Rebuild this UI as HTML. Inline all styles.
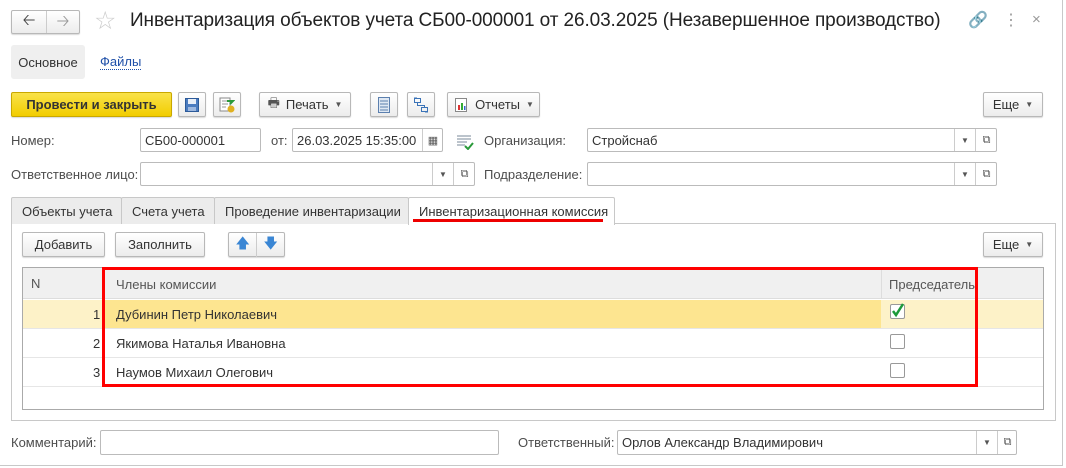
<!DOCTYPE html>
<html><head><meta charset="utf-8"><style>
*{box-sizing:border-box;margin:0;padding:0}
body{width:1066px;height:468px;background:#fff;font-family:"Liberation Sans",Arial,sans-serif;font-size:13px;color:#333;position:relative;overflow:hidden}
.a{position:absolute}
.btn{position:absolute;border:1px solid #b8b8b8;border-radius:2px;background:linear-gradient(#fff,#ececec);box-shadow:0 1px 1px rgba(0,0,0,.15);display:flex;align-items:center;justify-content:center;color:#333}
.inp{position:absolute;border:1px solid #bbb;border-radius:2px;background:#fff;display:flex;align-items:center;padding-left:4px;color:#333}
.lbl{position:absolute;color:#4d4d4d}
.dd{position:absolute;top:0;bottom:0;border-left:1px solid #ccc;display:flex;align-items:center;justify-content:center;font-size:8px;color:#555}
.tab{position:absolute;top:197px;height:27px;border:1px solid #c8c8c8;background:#ececec;border-bottom:none;display:flex;align-items:center;padding-left:10px;border-radius:2px 2px 0 0}
.cb{position:absolute;width:15px;height:15px;border:1px solid #999;border-radius:2px;background:#fff}
.tri{font-size:8px;margin-left:6px;color:#555}
</style></head><body>
<div class="a" style="left:0;top:0;width:1063px;height:466px;border:1px solid #c8c8c8;border-left:none;border-top:none"></div>
<div class="btn" style="left:11px;top:10px;width:69px;height:24px;justify-content:flex-start"><span style="width:35px;text-align:center;font-size:16px;color:#444">&#129120;</span><span style="border-left:1px solid #ccc;height:22px;width:34px;text-align:center;font-size:16px;color:#999;line-height:22px">&#129122;</span></div>
<div class="a" style="left:94px;top:6px;font-size:25px;color:#ccc">☆</div>
<div class="a" style="left:130px;top:10px;font-size:19px;color:#222;white-space:nowrap;letter-spacing:-0.1px">Инвентаризация объектов учета СБ00-000001 от 26.03.2025 (Незавершенное производство)</div>
<div class="a" style="left:968px;top:10px;font-size:16px;color:#aaa">&#128279;</div>
<div class="a" style="left:1003px;top:10px;font-size:16px;color:#999">⋮</div>
<div class="a" style="left:1032px;top:11px;font-size:15px;color:#999">×</div>
<div class="a" style="left:11px;top:45px;width:74px;height:34px;background:#efefef;border-radius:3px;display:flex;align-items:center;justify-content:center;color:#333">Основное</div>
<div class="a" style="left:100px;top:55px;color:#1e4fa8;border-bottom:1px dotted #1e4fa8;line-height:14px">Файлы</div>
<div class="btn" style="left:11px;top:92px;width:161px;height:25px;background:linear-gradient(#f9e24a,#f2cd00);border-color:#c9a800;font-weight:bold;color:#333">Провести и закрыть</div>
<div class="btn" style="left:178px;top:92px;width:28px;height:25px"><svg width="14" height="14"><rect x="0.5" y="0.5" width="13" height="13" fill="#4a7bbf" stroke="#2c5a99"/><rect x="3" y="1" width="8" height="5" fill="#e8eef7"/><rect x="3" y="9" width="8" height="4" fill="#9db8df"/></svg></div>
<div class="btn" style="left:213px;top:92px;width:28px;height:25px"><svg width="16" height="16"><rect x="1" y="1" width="10" height="13" fill="#fff" stroke="#888"/><path d="M3 4h6M3 7h6M3 10h4" stroke="#999"/><circle cx="12" cy="12" r="3.5" fill="#e0b020"/><path d="M8 4h6l-3 3" stroke="#2a9a3a" stroke-width="2" fill="none"/></svg></div>
<div class="btn" style="left:259px;top:92px;width:92px;height:25px"><span style="color:#555;margin-right:6px">🖶</span>Печать<span class="tri">▼</span></div>
<div class="btn" style="left:370px;top:92px;width:28px;height:25px"><svg width="12" height="16"><rect x="0.5" y="0.5" width="11" height="15" fill="#dfe8f3" stroke="#5b7fae"/><path d="M2 4h8M2 7h8M2 10h8M2 13h8" stroke="#5b7fae"/></svg></div>
<div class="btn" style="left:407px;top:92px;width:28px;height:25px"><svg width="16" height="16" fill="none" stroke="#3a73b8"><rect x="1.5" y="1.5" width="6" height="4"/><rect x="8.5" y="10.5" width="6" height="4"/><path d="M4.5 5.5v3h7v2M1 1h3M15 15h-3"/></svg></div>
<div class="btn" style="left:447px;top:92px;width:93px;height:25px"><svg width="16" height="16" style="margin-right:6px"><rect x="2.5" y="1.5" width="11" height="13" fill="#fff" stroke="#888"/><rect x="5" y="8" width="2" height="5" fill="#d33"/><rect x="8" y="6" width="2" height="7" fill="#3a3"/><rect x="11" y="9" width="1.5" height="4" fill="#36c"/></svg>Отчеты<span class="tri">▼</span></div>
<div class="btn" style="left:983px;top:92px;width:60px;height:25px">Еще<span class="tri">▼</span></div>

<div class="lbl" style="left:11px;top:133px">Номер:</div>
<div class="inp" style="left:140px;top:128px;width:121px;height:24px">СБ00-000001</div>
<div class="lbl" style="left:271px;top:133px">от:</div>
<div class="inp" style="left:292px;top:128px;width:151px;height:24px">26.03.2025 15:35:00<div class="dd" style="left:129px;width:21px;font-size:11px">▦</div></div>
<div class="a" style="left:456px;top:134px"><svg width="18" height="16"><path d="M1 2h14M1 5h14M1 8h10M1 11h8" stroke="#7a8a9a"/><path d="M9 12l3 3 5-6" stroke="#2a9a3a" stroke-width="2" fill="none"/></svg></div>
<div class="lbl" style="left:484px;top:133px">Организация:</div>
<div class="inp" style="left:587px;top:128px;width:410px;height:24px">Стройснаб<div class="dd" style="left:366px;width:21px">▼</div><div class="dd" style="left:387px;width:22px;font-size:11px">⧉</div></div>

<div class="lbl" style="left:11px;top:167px">Ответственное лицо:</div>
<div class="inp" style="left:140px;top:162px;width:335px;height:24px"><div class="dd" style="left:291px;width:21px">▼</div><div class="dd" style="left:312px;width:22px;font-size:11px">⧉</div></div>
<div class="lbl" style="left:484px;top:167px">Подразделение:</div>
<div class="inp" style="left:587px;top:162px;width:410px;height:24px"><div class="dd" style="left:366px;width:21px">▼</div><div class="dd" style="left:387px;width:22px;font-size:11px">⧉</div></div>

<div class="a" style="left:11px;top:223px;width:1045px;height:198px;border:1px solid #c8c8c8"></div>
<div class="tab" style="left:11px;width:111px">Объекты учета</div>
<div class="tab" style="left:121px;width:94px">Счета учета</div>
<div class="tab" style="left:214px;width:195px">Проведение инвентаризации</div>
<div class="tab" style="left:408px;width:207px;height:28px;background:#fff;z-index:2">Инвентаризационная комиссия</div>
<div class="a" style="left:413px;top:219px;width:190px;height:3px;background:#e00;z-index:3"></div>

<div class="btn" style="left:22px;top:232px;width:83px;height:25px">Добавить</div>
<div class="btn" style="left:115px;top:232px;width:90px;height:25px">Заполнить</div>
<div class="btn" style="left:228px;top:232px;width:57px;height:25px;justify-content:flex-start"><span style="width:28px;text-align:center;color:#3a86d4;font-size:14px">🡅</span><span style="width:28px;text-align:center;color:#3a86d4;font-size:14px;border-left:1px solid #ccc">🡇</span></div>
<div class="btn" style="left:983px;top:232px;width:60px;height:25px">Еще<span class="tri">▼</span></div>

<div class="a" style="left:22px;top:267px;width:1022px;height:143px;border:1px solid #aaa;background:#fff">
 <div class="a" style="left:0;top:0;width:1020px;height:31px;background:#f0f0f0;border-bottom:1px solid #ddd"></div>
 <div class="a" style="left:80px;top:0;width:1px;height:31px;background:#ddd"></div>
 <div class="a" style="left:858px;top:0;width:1px;height:31px;background:#ddd"></div>
 <div class="a" style="left:8px;top:8px;color:#555">N</div>
 <div class="a" style="left:93px;top:9px;color:#555">Члены комиссии</div>
 <div class="a" style="left:866px;top:9px;color:#555">Председатель</div>
 <div class="a" style="left:0;top:32px;width:1020px;height:28px;background:#fdf2c8"></div>
 <div class="a" style="left:82px;top:32px;width:776px;height:28px;background:#fde590"></div>
 <div class="a" style="left:0;top:60px;width:1020px;height:1px;background:#e6e6e6"></div>
 <div class="a" style="left:0;top:89px;width:1020px;height:1px;background:#e6e6e6"></div>
 <div class="a" style="left:0;top:118px;width:1020px;height:1px;background:#e6e6e6"></div>
 <div class="a" style="left:70px;top:39px">1</div><div class="a" style="left:93px;top:39px">Дубинин Петр Николаевич</div>
 <div class="a" style="left:70px;top:68px">2</div><div class="a" style="left:93px;top:68px">Якимова Наталья Ивановна</div>
 <div class="a" style="left:70px;top:97px">3</div><div class="a" style="left:93px;top:97px">Наумов Михаил Олегович</div>
 <div class="cb" style="left:867px;top:36px"></div>
 <svg class="a" style="left:867px;top:32px" width="18" height="18"><path d="M3 11l3 4 7-11" stroke="#1d9a3a" stroke-width="2.5" fill="none"/></svg>
 <div class="cb" style="left:867px;top:66px"></div>
 <div class="cb" style="left:867px;top:95px"></div>
</div>
<div class="a" style="left:102px;top:267px;width:876px;height:120px;border:3px solid #f00"></div>

<div class="lbl" style="left:11px;top:435px">Комментарий:</div>
<div class="inp" style="left:100px;top:430px;width:399px;height:25px"></div>
<div class="lbl" style="left:518px;top:435px">Ответственный:</div>
<div class="inp" style="left:617px;top:430px;width:400px;height:25px">Орлов Александр Владимирович<div class="dd" style="left:358px;width:21px">▼</div><div class="dd" style="left:379px;width:20px;font-size:11px">⧉</div></div>
</body></html>
